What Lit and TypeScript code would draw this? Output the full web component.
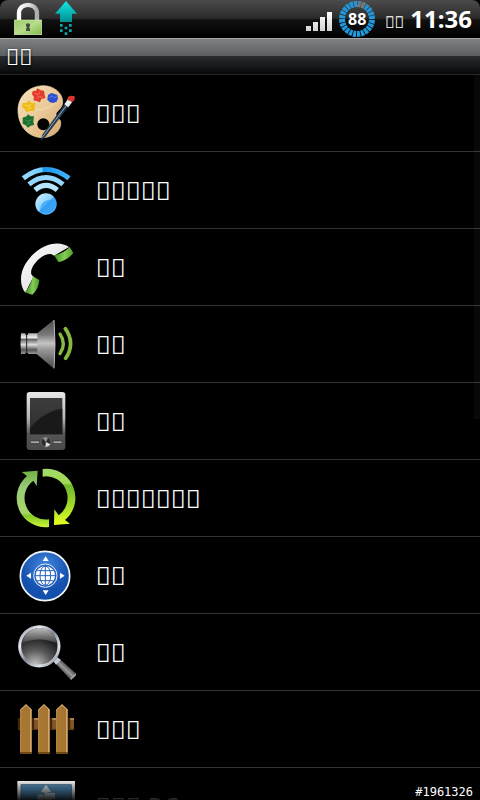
import { LitElement, html, css, svg, type TemplateResult } from "lit";
import { customElement } from "lit/decorators.js";

// Code point with no glyph: the device draws an empty box for each one.
const BOX = "\uE83A";

const palette = svg`
  <defs>
    <linearGradient id="wood" x1="0" y1="0" x2="1" y2="1"><stop offset="0" stop-color="#f6e2bd"/><stop offset=".55" stop-color="#e9c795"/><stop offset="1" stop-color="#d9a86c"/></linearGradient>
  </defs>
  <path d="M128 32C158 31 188 52 188 80C188 104 166 106 168 120C170 134 184 128 182 148C180 172 152 188 128 188C84 188 54 152 54 106C54 62 88 34 128 32Z" fill="url(#wood)" stroke="#f1dcb6" stroke-width="2"/>
  <path d="M60 128C90 90 140 120 172 76" fill="none" stroke="#f5dfb8" stroke-width="5" opacity=".5"/>
  <circle cx="130" cy="148" r="18" fill="#050302"/>
  <path d="M98 48L108 47L112 40L122 46L132 47L134 60L136 70L124 72L120 82L110 78L100 76L102 66L96 58Z" fill="#e23a2c"/>
  <path d="M104 54l9 6 6-8M110 70l8-6 10 4" stroke="#ff9a82" stroke-width="2" fill="none"/>
  <path d="M144 60L154 54L162 56L172 60L174 70L170 80L160 84L150 82L142 74Z" fill="#2b4fd0"/>
  <path d="M148 68l8-6 6 6 8-2" stroke="#7d98f4" stroke-width="2" fill="none"/>
  <path d="M68 84L80 84L86 76L94 84L106 84L104 96L104 108L90 108L80 112L74 102L66 96Z" fill="#eebc16"/>
  <path d="M76 90l10 4 8-6M84 102l10-4" stroke="#ffe98a" stroke-width="2" fill="none"/>
  <path d="M68 128L80 124L84 118L92 124L102 124L100 138L102 150L92 152L84 158L76 150L68 146Z" fill="#1c7034"/>
  <path d="M76 134l8 6 10-6M80 148l10-4" stroke="#55a860" stroke-width="2" fill="none"/>
  <path d="M121 197L128 178L194 88L205 95L136 186Z" fill="#24384a"/>
  <path d="M127 187L199 92" stroke="#8fb0c4" stroke-width="3"/>
  <path d="M193 88L204 72L217 80L205 97Z" fill="#e8edf0"/>
  <path d="M202 74C201 64 212 60 224 64C225 74 222 82 214 80Z" fill="#d8352d"/>`;

const wifi = svg`
  <defs>
    <linearGradient id="wl" x1="66" x2="211" y1="0" y2="0" gradientUnits="userSpaceOnUse"><stop offset="0" stop-color="#9bdbff"/><stop offset=".42" stop-color="#72c8ff"/><stop offset=".43" stop-color="#1595ee"/><stop offset="1" stop-color="#48b1fa"/></linearGradient>
    <linearGradient id="wb" x1="0" x2="1" y1="0" y2="1"><stop offset="0" stop-color="#d4f2ff"/><stop offset=".5" stop-color="#8bd0ff"/><stop offset=".52" stop-color="#3fa6f6"/><stop offset="1" stop-color="#6fc1fb"/></linearGradient>
  </defs>
  <g fill="none" stroke-width="15">
    <path d="M70 79Q138 26 207 79" stroke="url(#wl)"/>
    <path d="M87 97Q138 56 189 97" stroke="#94d6ff"/>
    <path d="M105 114Q138 86 172 114" stroke="#b5e5ff"/>
  </g>
  <circle cx="138" cy="156" r="32" fill="url(#wb)"/>
  <path d="M120 178C120 150 138 140 167 143C174 162 160 184 140 185Q128 184 120 178Z" fill="#2c9bf2" opacity=".65"/>`;

const phone = svg`
  <defs>
    <linearGradient id="ph" x1="0" x2="1" y1="0" y2="1"><stop offset="0" stop-color="#fff"/><stop offset="1" stop-color="#d2d2d2"/></linearGradient>
    <linearGradient id="pg" x1="0" x2="1"><stop offset="0" stop-color="#3e8e22"/><stop offset=".55" stop-color="#86cc55"/><stop offset="1" stop-color="#4e9c2a"/></linearGradient>
  </defs>
  <path d="M76 191C56 166 58 122 90 86C124 44 178 32 207 54L162 80C152 70 136 76 122 86C104 100 90 120 94 136L100 144Z" fill="url(#ph)"/>
  <path d="M162 79Q190 74 209 54L220 72Q202 94 176 100Z" fill="url(#pg)"/>
  <path d="M99 142Q106 147 118 153Q116 180 97 197Q84 194 75 190Q92 172 99 142Z" fill="url(#pg)"/>`;

const speaker = svg`
  <defs>
    <linearGradient id="sp" x1="0" x2="0" y1="0" y2="1"><stop offset="0" stop-color="#4d4d4d"/><stop offset=".3" stop-color="#777"/><stop offset=".48" stop-color="#c4c4c4"/><stop offset=".62" stop-color="#969696"/><stop offset="1" stop-color="#444"/></linearGradient>
    <linearGradient id="sn" x1="0" x2="0" y1="0" y2="1"><stop offset="0" stop-color="#aaa"/><stop offset=".2" stop-color="#eee"/><stop offset=".3" stop-color="#666"/><stop offset=".55" stop-color="#ddd"/><stop offset=".8" stop-color="#555"/><stop offset="1" stop-color="#999"/></linearGradient>
  </defs>
  <path d="M110 83L162 41Q168 114 162 188L110 144Z" fill="url(#sp)"/>
  <path d="M162 42Q168 114 162 187" fill="none" stroke="#bbb" stroke-width="3"/>
  <path d="M63 82H76V86H84V82H112V144H84V140H76V144H63Q60 114 63 82Z" fill="url(#sn)"/>
  <path d="M80 86V140" stroke="#222" stroke-width="3"/>
  <g fill="none" stroke="#86b93f" stroke-linecap="round">
    <path d="M180 84Q200 113 180 143" stroke-width="10"/>
    <path d="M196 68Q227 112 197 157" stroke-width="11"/>
  </g>`;

const pda = svg`
  <defs>
    <linearGradient id="pb" x1="0" x2="0" y1="0" y2="1"><stop offset="0" stop-color="#e9e9e9"/><stop offset=".45" stop-color="#b5b5b5"/><stop offset=".72" stop-color="#555"/><stop offset="1" stop-color="#494949"/></linearGradient>
    <linearGradient id="ps" x1="0" x2="0" y1="0" y2="1"><stop offset="0" stop-color="#3d3d3d"/><stop offset="1" stop-color="#2c2c2c"/></linearGradient>
  </defs>
  <rect x="80" y="27" width="116" height="174" rx="9" fill="url(#pb)"/>
  <rect x="90" y="45" width="97" height="109" fill="url(#ps)"/>
  <path d="M90 136Q126 88 187 77V154H90Z" fill="#191919"/>
  <rect x="91" y="174" width="27" height="7" fill="#aaa" stroke="#333" stroke-width="2"/>
  <rect x="159" y="174" width="27" height="7" fill="#aaa" stroke="#333" stroke-width="2"/>
  <circle cx="138" cy="177" r="15" fill="#2d2d2d" stroke="#777" stroke-width="2"/>
  <path d="M138 177L128 166A14 14 0 0 1 144 165Z" fill="#909090"/>
  <path d="M138 177L151 184A14 14 0 0 1 136 191Z" fill="#ddd"/>`;

const sync = svg`
  <defs>
    <linearGradient id="sy1" x1="0" x2="0" y1="0" y2="1"><stop offset="0" stop-color="#a3d96c"/><stop offset=".25" stop-color="#a2dc52"/><stop offset=".3" stop-color="#70b72c"/><stop offset=".7" stop-color="#a9df2b"/><stop offset="1" stop-color="#eaff20"/></linearGradient>
    <linearGradient id="sy2" x1="0" x2="0" y1="0" y2="1"><stop offset="0" stop-color="#6fb042"/><stop offset=".3" stop-color="#98cb78"/><stop offset=".75" stop-color="#a6d568"/><stop offset=".8" stop-color="#85ca23"/><stop offset="1" stop-color="#ccf53a"/></linearGradient>
  </defs>
  <path d="M128 27A87 87 0 0 1 195 180L210 191L162 195L163 148L176 166A64.5 64.5 0 0 0 128 50Z" fill="url(#sy1)"/>
  <path d="M147 201A87 87 0 0 1 81 48L65 36L113 32L110 78L100 62A64.5 64.5 0 0 0 147 178Z" fill="url(#sy2)"/>`;

const globe = svg`
  <defs><radialGradient id="gl" cy=".3"><stop offset="0" stop-color="#4387df"/><stop offset="1" stop-color="#1450ae"/></radialGradient></defs>
  <circle cx="135" cy="117" r="74" fill="url(#gl)" stroke="#f4f8fc" stroke-width="5"/>
  <circle cx="136" cy="116" r="35" fill="#2767c0" stroke="#e9f2fb" stroke-width="3"/>
  <circle cx="136" cy="116" r="29" fill="#fff"/>
  <g fill="none" stroke="#2462ba" stroke-width="3">
    <ellipse cx="136" cy="116" rx="16" ry="29"/>
    <path d="M136 86V146M106 116H166M112 101H160M112 131H160"/>
  </g>
  <path d="M137 58L146 72H128ZM137 174L146 160H128ZM79 116L93 107V125ZM194 116L180 107V125Z" fill="#fff"/>`;

const magnifier = svg`
  <defs>
    <linearGradient id="mr" x1="0" x2="1" y1="0" y2="1"><stop offset="0" stop-color="#7d8490"/><stop offset=".25" stop-color="#e8ecf2"/><stop offset=".5" stop-color="#7e8794"/><stop offset=".75" stop-color="#dfe5ec"/><stop offset="1" stop-color="#69717d"/></linearGradient>
    <radialGradient id="mg" cx=".4" cy="1" r=".8"><stop offset="0" stop-color="#ccc"/><stop offset=".5" stop-color="#5c5c5c"/><stop offset="1" stop-color="#131313"/></radialGradient>
    <linearGradient id="mt" x1="0" x2="0" y1="0" y2="1"><stop offset="0" stop-color="#bbb"/><stop offset="1" stop-color="#3c3c3c"/></linearGradient>
    <linearGradient id="mh" x1="0" x2="1" y1="1" y2="0"><stop offset=".3" stop-color="#222"/><stop offset=".5" stop-color="#999"/><stop offset=".7" stop-color="#333"/></linearGradient>
  </defs>
  <path d="M163 145L179 135L230 180L213 198Z" fill="url(#mh)"/>
  <path d="M160 142L172 130L183 138L168 152Z" fill="#c3c9d0"/>
  <path d="M212 196L229 180" stroke="#aaa" stroke-width="4"/>
  <circle cx="118" cy="97" r="59" fill="url(#mg)" stroke="url(#mr)" stroke-width="9"/>
  <path d="M66 88A53 53 0 0 1 171 88Q118 65 66 88Z" fill="url(#mt)"/>`;

const fence = svg`
  <defs><linearGradient id="fp" x1="0" x2="1"><stop offset="0" stop-color="#b78845"/><stop offset=".15" stop-color="#a87833"/><stop offset=".83" stop-color="#a57431"/><stop offset=".9" stop-color="#e6c18c"/><stop offset="1" stop-color="#80531e"/></linearGradient></defs>
  <rect x="54" y="81" width="168" height="36" fill="#825728"/>
  <path d="M54 84H222" stroke="#c09560" stroke-width="5"/>
  <path d="M54 115H222" stroke="#5b3915" stroke-width="4"/>
  <path d="M57 81V115M99 81V115M153 81V115M207 81V115" stroke="#402508" stroke-width="7"/>
  ${[60, 114, 168].map((x) => svg`
    <path d="M${x} 188V57L${x + 18} 40L${x + 36} 57V188Z" fill="url(#fp)"/>
    <path d="M${x + 1} 57L${x + 18} 41L${x + 35} 57" fill="none" stroke="#e2be86" stroke-width="3"/>
    <path d="M${x} 186H${x + 36}" stroke="#68420f" stroke-width="5"/>`)}`;

const usb = svg`
  <defs><linearGradient id="ub" x1="0" x2="0" y1="0" y2="1"><stop offset="0" stop-color="#4f8db9"/><stop offset="1" stop-color="#6db4df"/></linearGradient></defs>
  <rect x="52" y="39" width="173" height="130" fill="#f4f4f4"/>
  <rect x="63" y="50" width="151" height="108" fill="url(#ub)" stroke="#35576e" stroke-width="2"/>
  <path d="M138 50L154 73H122ZM133 73H143V150H133ZM143 75H165V92H155V100H143Z" fill="#d8e7f1"/>
  <circle cx="122" cy="90" r="11" fill="#d8e7f1"/>`;

const items: { icon: TemplateResult; label: string }[] = [
  { icon: palette, label: BOX.repeat(3) },
  { icon: wifi, label: BOX.repeat(5) },
  { icon: phone, label: BOX.repeat(2) },
  { icon: speaker, label: BOX.repeat(2) },
  { icon: pda, label: BOX.repeat(2) },
  { icon: sync, label: BOX.repeat(7) },
  { icon: globe, label: BOX.repeat(2) },
  { icon: magnifier, label: BOX.repeat(2) },
  { icon: fence, label: BOX.repeat(3) },
  { icon: usb, label: BOX.repeat(3) + " PC" },
];

@customElement("status-bar")
export class StatusBar extends LitElement {
  static styles = css`
    :host { display: block; background: #000; }
    .bar {
      display: flex; align-items: center; box-sizing: border-box; height: 38px;
      padding: 0 8px 0 12px; border-radius: 8px 8px 0 0; color: #fff;
      background: linear-gradient(#4b4b4b, #2b2b2b 48%, #111 52%, #000);
    }
    svg { display: block; flex: none; }
    .notices { display: flex; gap: 8px; flex: 1; }
    .signal { margin-right: 6px; }
    .battery { display: grid; place-items: center; margin-right: 9px; }
    .battery > * { grid-area: 1 / 1; }
    .level { font-size: 16px; font-weight: 700; line-height: 38px; }
    .period { box-sizing: border-box; height: 38px; padding-top: 6px; font-size: 16px; font-weight: 300; line-height: 32px; margin-right: 6px; }
    .clock { font-size: 24px; font-weight: 700; line-height: 38px; }
  `;

  render() {
    return html`<div class="bar">
      <div class="notices">
        <svg width="32" height="38" viewBox="36 0 96 114" aria-hidden="true">
          <defs>
            <linearGradient id="lb" x1="0" x2="1" y1="0" y2="1"><stop offset="0" stop-color="#9ccc6c"/><stop offset=".5" stop-color="#b7dd8b"/><stop offset="1" stop-color="#7db94a"/></linearGradient>
            <linearGradient id="ls" x1="0" x2="1"><stop offset="0" stop-color="#fff"/><stop offset=".6" stop-color="#ddd"/><stop offset="1" stop-color="#aaa"/></linearGradient>
          </defs>
          <path d="M57 62V40C57 6 111 6 111 40V62" fill="none" stroke="url(#ls)" stroke-width="13"/>
          <rect x="43" y="60" width="82" height="44" fill="url(#lb)" stroke="#d5edb4" stroke-width="2"/>
          <path d="M78 72Q84 67 90 72V79L87 82L90 86V93H78V86L81 82L78 79Z" fill="#454d3e"/>
        </svg>
        <svg width="28" height="38" viewBox="156 0 84 114" aria-hidden="true">
          <defs><linearGradient id="up" x1="0" x2="0" y1="0" y2="1"><stop offset="0" stop-color="#12e6e3"/><stop offset="1" stop-color="#008f91"/></linearGradient></defs>
          <path d="M198 3L231 41H216V66H180V41H165Z" fill="url(#up)"/>
          <path d="M180 72h8v8h-8zM207 72h8v8h-8zM194 80h8v8h-8zM180 88h8v8h-8zM207 88h8v8h-8zM194 97h8v8h-8z" fill="#12a5a9"/>
        </svg>
      </div>
      <svg class="signal" width="26" height="38" viewBox="0 0 26 38" role="img" aria-label="Signal">
        <defs><linearGradient id="sg" x1="0" x2="0" y1="0" y2="1"><stop offset="0" stop-color="#fff"/><stop offset="1" stop-color="#d2d2d2"/></linearGradient></defs>
        <path d="M0 26H5V31H0ZM7 22H12V31H7ZM14 17H19V31H14ZM21 12H26V31H21Z" fill="url(#sg)"/>
      </svg>
      <div class="battery">
        <svg width="38" height="38" viewBox="0 0 38 38" aria-hidden="true">
          <g fill="none" stroke-width="6" transform="rotate(3 19 19)">
            <path d="M19 4A15 15 0 1 1 18.99 4" pathLength="240" stroke="#2197dc" stroke-dasharray="8 2"/>
            <path d="M19 4A15 15 0 1 1 18.99 4" pathLength="240" stroke="#777" stroke-dasharray="8 2 8 222"/>
          </g>
        </svg>
        <span class="level">88</span>
      </div>
      <span class="period">${BOX.repeat(2)}</span>
      <time class="clock">11:36</time>
    </div>`;
  }
}

@customElement("app-root")
export class AppRoot extends LitElement {
  static styles = css`
    :host {
      display: flex; flex-direction: column; position: relative; height: 100vh; overflow: hidden;
      background: #000; color: #fff; font-family: "Noto Sans", "Open Sans", sans-serif;
    }
    .title {
      box-sizing: border-box; height: 37px; margin: 0; padding: 0 6px; flex: none;
      border-top: 1px solid #a6a8a8; border-bottom: 1px solid #252929;
      background: linear-gradient(#7e8182, #5c5f60 48%, #292d2e 49%, #070909);
      font-size: 22px; font-weight: 400; line-height: 34px; text-shadow: 0 1px 3px #000;
    }
    .list { list-style: none; margin: 0; padding: 0; flex: 1; min-height: 0; overflow-y: auto; scrollbar-width: none; }
    .item { border-bottom: 1px solid #343234; }
    .row {
      display: flex; align-items: center; gap: 20px; width: 100%; height: 76px; padding: 0 16px;
      border: 0; background: none; color: inherit; font: inherit; font-size: 25px; line-height: 34px; text-align: left;
    }
    .icon { display: block; flex: none; }
    .thumb { position: absolute; right: 0; top: 75px; width: 6px; height: 43%; background: rgba(255, 255, 255, 0.03); pointer-events: none; }
    .fade { position: absolute; left: 0; right: 0; bottom: 0; height: 20px; background: linear-gradient(transparent, rgba(0, 0, 0, 0.9)); pointer-events: none; }
    .tag { position: absolute; right: 7px; bottom: 1px; font-family: "DejaVu Sans Mono", monospace; font-size: 12px; line-height: 14px; }
  `;

  render() {
    return html`
      <status-bar></status-bar>
      <h1 class="title">${BOX.repeat(2)}</h1>
      <ul class="list">
        ${items.map(({ icon, label }) => html`<li class="item">
          <button class="row" type="button">
            <svg class="icon" width="60" height="60" viewBox="48 24 180 180" aria-hidden="true">${icon}</svg>
            <span>${label}</span>
          </button>
        </li>`)}
      </ul>
      <div class="thumb"></div>
      <div class="fade"></div>
      <span class="tag">#1961326</span>
    `;
  }
}
